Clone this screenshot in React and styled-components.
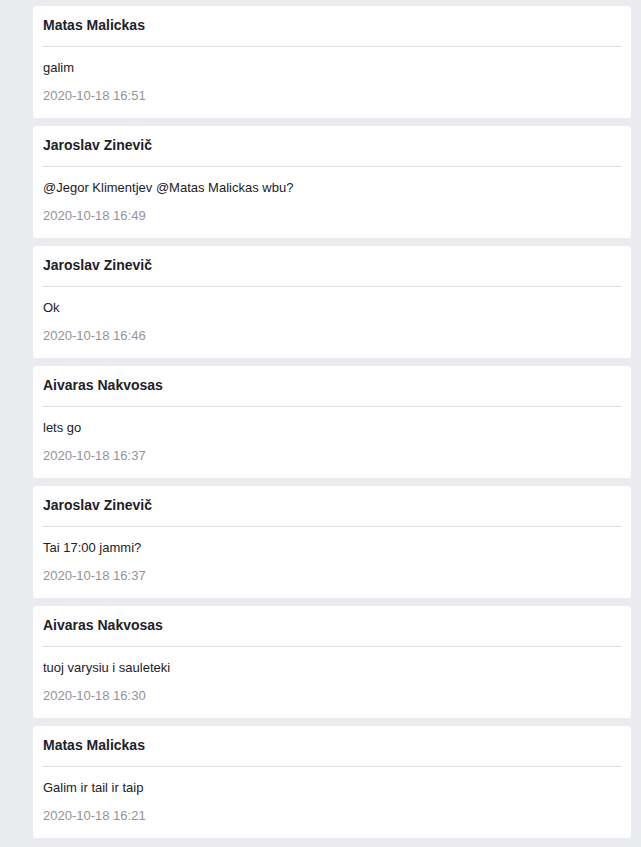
import React from "react"
import styled, { createGlobalStyle } from "styled-components"

const GlobalStyle = createGlobalStyle`
  html, body {
    margin: 0;
    padding: 0;
    background: #e9ebee;
    font-family: "Liberation Sans", Arial, sans-serif;
  }
`

const Feed = styled.div`
  display: flex;
  flex-direction: column;
  gap: 8px;
  padding: 6px 10px 8px 33px;
`

const Card = styled.div`
  background: #fff;
  border-radius: 3px;
  padding: 0 10px 13px;
`

const CardHeader = styled.div`
  box-sizing: border-box;
  height: 41px;
  padding-top: 10px;
  border-bottom: 1px solid #dadde1;
  font-size: 14px;
  font-weight: 700;
  line-height: 18px;
  color: #1d2129;
`

const Message = styled.div`
  margin-top: 12px;
  font-size: 13px;
  line-height: 18px;
  color: #1d2129;
`

const Time = styled.div`
  margin-top: 10px;
  font-size: 13px;
  line-height: 18px;
  color: #90949c;
`

const comments = [
  { author: "Matas Malickas", text: "galim", time: "2020-10-18 16:51" },
  { author: "Jaroslav Zinevič", text: "@Jegor Klimentjev @Matas Malickas wbu?", time: "2020-10-18 16:49" },
  { author: "Jaroslav Zinevič", text: "Ok", time: "2020-10-18 16:46" },
  { author: "Aivaras Nakvosas", text: "lets go", time: "2020-10-18 16:37" },
  { author: "Jaroslav Zinevič", text: "Tai 17:00 jammi?", time: "2020-10-18 16:37" },
  { author: "Aivaras Nakvosas", text: "tuoj varysiu i sauleteki", time: "2020-10-18 16:30" },
  { author: "Matas Malickas", text: "Galim ir tail ir taip", time: "2020-10-18 16:21" },
]

export default function App() {
  return (
    <>
      <GlobalStyle />
      <Feed>
        {comments.map((c, i) => (
          <Card key={i}>
            <CardHeader>{c.author}</CardHeader>
            <Message>{c.text}</Message>
            <Time>{c.time}</Time>
          </Card>
        ))}
      </Feed>
    </>
  )
}
